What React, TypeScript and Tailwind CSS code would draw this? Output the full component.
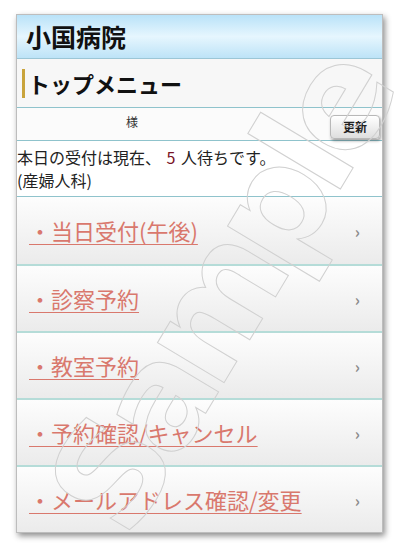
import React from "react";

const menu = [
  "・当日受付(午後)",
  "・診察予約",
  "・教室予約",
  "・予約確認/キャンセル",
  "・メールアドレス確認/変更",
];

const jp = "font-['Noto_Sans_CJK_JP','Noto_Sans',sans-serif]";

export default function App() {
  return (
    <div className={`relative w-[400px] h-[550px] bg-white pt-[14px] pl-[16px] overflow-hidden ${jp}`}>
      <div className="w-[367px] bg-white shadow-[2px_3px_6px_rgba(0,0,0,0.45)] border border-[#bdbdbd]">
        {/* header */}
        <div className="h-[44px] flex items-center pl-[9px] border-b border-[#9cc6d6] bg-[linear-gradient(#b9e2f8,#e6f6fe_50%,#bde3f7)]">
          <h1 className="text-[25px] font-bold text-[#111] leading-none">小国病院</h1>
        </div>

        {/* section title */}
        <div className="h-[49px] flex items-center pl-[5px] bg-[#f7f7f7] border-b border-[#8fc3cc]">
          <div className="w-[3px] h-[29px] bg-[#c9a43c]" />
          <h2 className="ml-[3px] text-[22px] font-bold text-[#111] leading-none">トップメニュー</h2>
        </div>

        {/* user row */}
        <div className="h-[33px] flex items-center bg-[#fbfbfb] border-b border-[#8fc3cc]">
          <span className="w-[230px] -mt-[4px] text-center text-[12px] text-[#333]">様</span>
          <button className="ml-auto mr-[2px] mt-[6px] h-[24px] w-[50px] rounded-[4px] border border-[#b8b8b8] bg-[linear-gradient(#ffffff,#dedede)] shadow-[1px_2px_3px_rgba(0,0,0,0.35)] text-[12px] font-bold text-[#222]">
            更新
          </button>
        </div>

        {/* info */}
        <div className="h-[56px] pt-[5px] bg-white border-b border-[#8fc3cc] text-[16px] leading-[23px] text-[#222]">
          <p>
            本日の受付は現在、 <span className="text-[#7a1426] mx-[2px]">5</span> 人待ちです。
          </p>
          <p>(産婦人科)</p>
        </div>

        {/* menu */}
        {menu.map((m, i) => (
          <a
            key={m}
            href="#"
            className={`h-[67px] flex items-center pl-[12px] pr-[22px] bg-[linear-gradient(#fdfdfd,#ebebeb)] ${i > 0 ? "border-t-2 border-[#b5dcd8]" : ""}`}
          >
            <span className="text-[22px] text-[#d9786d] underline decoration-[#d9786d] underline-offset-[4px] decoration-1">
              {m}
            </span>
            <span className="ml-auto text-[16px] font-bold text-[#8a8a8a]">›</span>
          </a>
        ))}
      </div>

      {/* watermark */}
      <div className="pointer-events-none absolute left-[-30px] top-[240px] w-[480px] text-center origin-center rotate-[-59deg] font-['DejaVu_Sans',sans-serif] font-bold tracking-[-12px] text-[142px] leading-none text-transparent [-webkit-text-stroke:1px_#d0d0d0]">
        Sample
      </div>
    </div>
  );
}
